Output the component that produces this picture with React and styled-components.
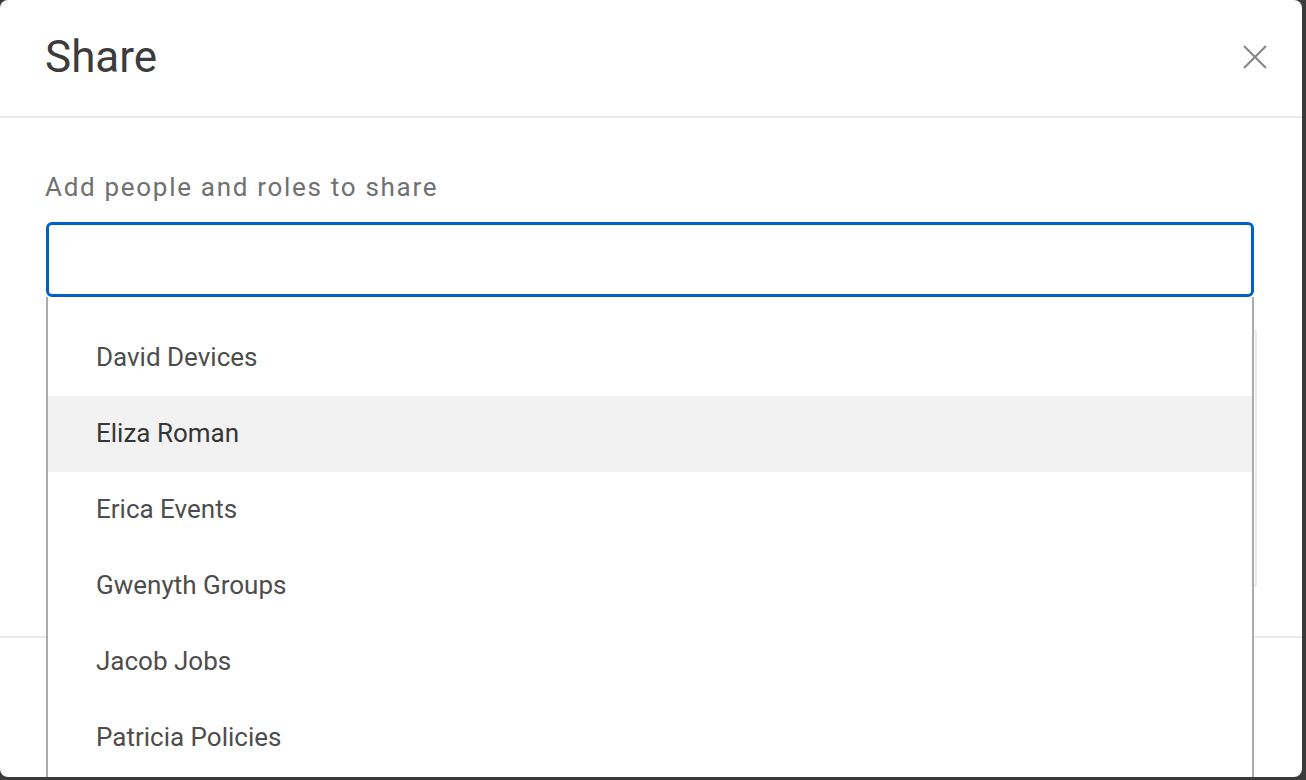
import React from "react";
import styled, { createGlobalStyle } from "styled-components";

const GlobalStyle = createGlobalStyle`
  html, body { margin: 0; padding: 0; background: #3a3a3a; }
  body { font-family: Roboto, "Noto Sans", "Liberation Sans", sans-serif; }
  * { box-sizing: border-box; }
`;

const Modal = styled.div`
  width: 1302px;
  height: 777px;
  background: #ffffff;
  border-radius: 8px;
  overflow: hidden;
  display: flex;
  flex-direction: column;
`;

const Header = styled.header`
  height: 118px;
  flex: none;
  display: flex;
  align-items: center;
  justify-content: space-between;
  padding: 0 29px 2px 45px;
  border-bottom: 2px solid #e8e8e8;
`;

const Title = styled.h1`
  margin: 0;
  font-size: 44px;
  font-weight: 400;
  color: #3c3c3c;
  line-height: 1;
`;

const CloseButton = styled.button`
  width: 36px;
  height: 36px;
  border: none;
  background: transparent;
  padding: 0;
  display: flex;
  align-items: center;
  justify-content: center;
  color: #858585;
  cursor: pointer;
`;

const Body = styled.main`
  flex: 1;
  padding: 53px 45px 0 46px;
  display: flex;
  flex-direction: column;
`;

const Label = styled.label`
  font-size: 26px;
  line-height: 32px;
  letter-spacing: 1.7px;
  color: #707070;
  margin-left: -1px;
`;

const Field = styled.div`
  position: relative;
  margin-top: 19px;
  margin-right: 3px;
`;

const Input = styled.input`
  display: block;
  width: 100%;
  height: 75px;
  border: 3px solid #005fcc;
  border-radius: 6px;
  outline: none;
  font: inherit;
  font-size: 26px;
  padding: 0 20px;
  background: #fff;
`;

const Listbox = styled.ul`
  position: absolute;
  top: 100%;
  left: 0;
  right: 0;
  height: 500px;
  margin: 0;
  padding: 23px 0 0;
  list-style: none;
  background: #fff;
  border-left: 2px solid #ababab;
  border-right: 2px solid #ababab;
  z-index: 2;
`;

const Option = styled.li`
  height: 76px;
  display: flex;
  align-items: center;
  padding: 0 0 2px 48px;
  font-size: 26px;
  color: ${(p) => (p.$active ? "#363636" : "#4d4d4d")};
  background: ${(p) => (p.$active ? "#f2f2f2" : "transparent")};
`;

const Table = styled.div`
  margin-top: 33px;
  height: 257px;
  border: 2px solid #e6eae9;
  border-radius: 2px;
  background: #fcfcfc;
`;

const Footer = styled.footer`
  margin-top: 49px;
  flex: 1;
  border-top: 2px solid #e6ebea;
`;

const people = [
  "David Devices",
  "Eliza Roman",
  "Erica Events",
  "Gwenyth Groups",
  "Jacob Jobs",
  "Patricia Policies",
];

export default function App() {
  return (
    <>
      <GlobalStyle />
      <Modal>
        <Header>
          <Title>Share</Title>
          <CloseButton aria-label="Close">
            <svg width="26" height="26" viewBox="0 0 26 26" fill="none">
              <path d="M2 2 L24 24 M24 2 L2 24" stroke="currentColor" strokeWidth="2" />
            </svg>
          </CloseButton>
        </Header>
        <Body>
          <Label htmlFor="share-input">Add people and roles to share</Label>
          <Field>
            <Input id="share-input" />
            <Listbox role="listbox">
              {people.map((name) => (
                <Option key={name} $active={name === "Eliza Roman"}>
                  {name}
                </Option>
              ))}
            </Listbox>
          </Field>
          <Table />
        </Body>
        <Footer />
      </Modal>
    </>
  );
}
